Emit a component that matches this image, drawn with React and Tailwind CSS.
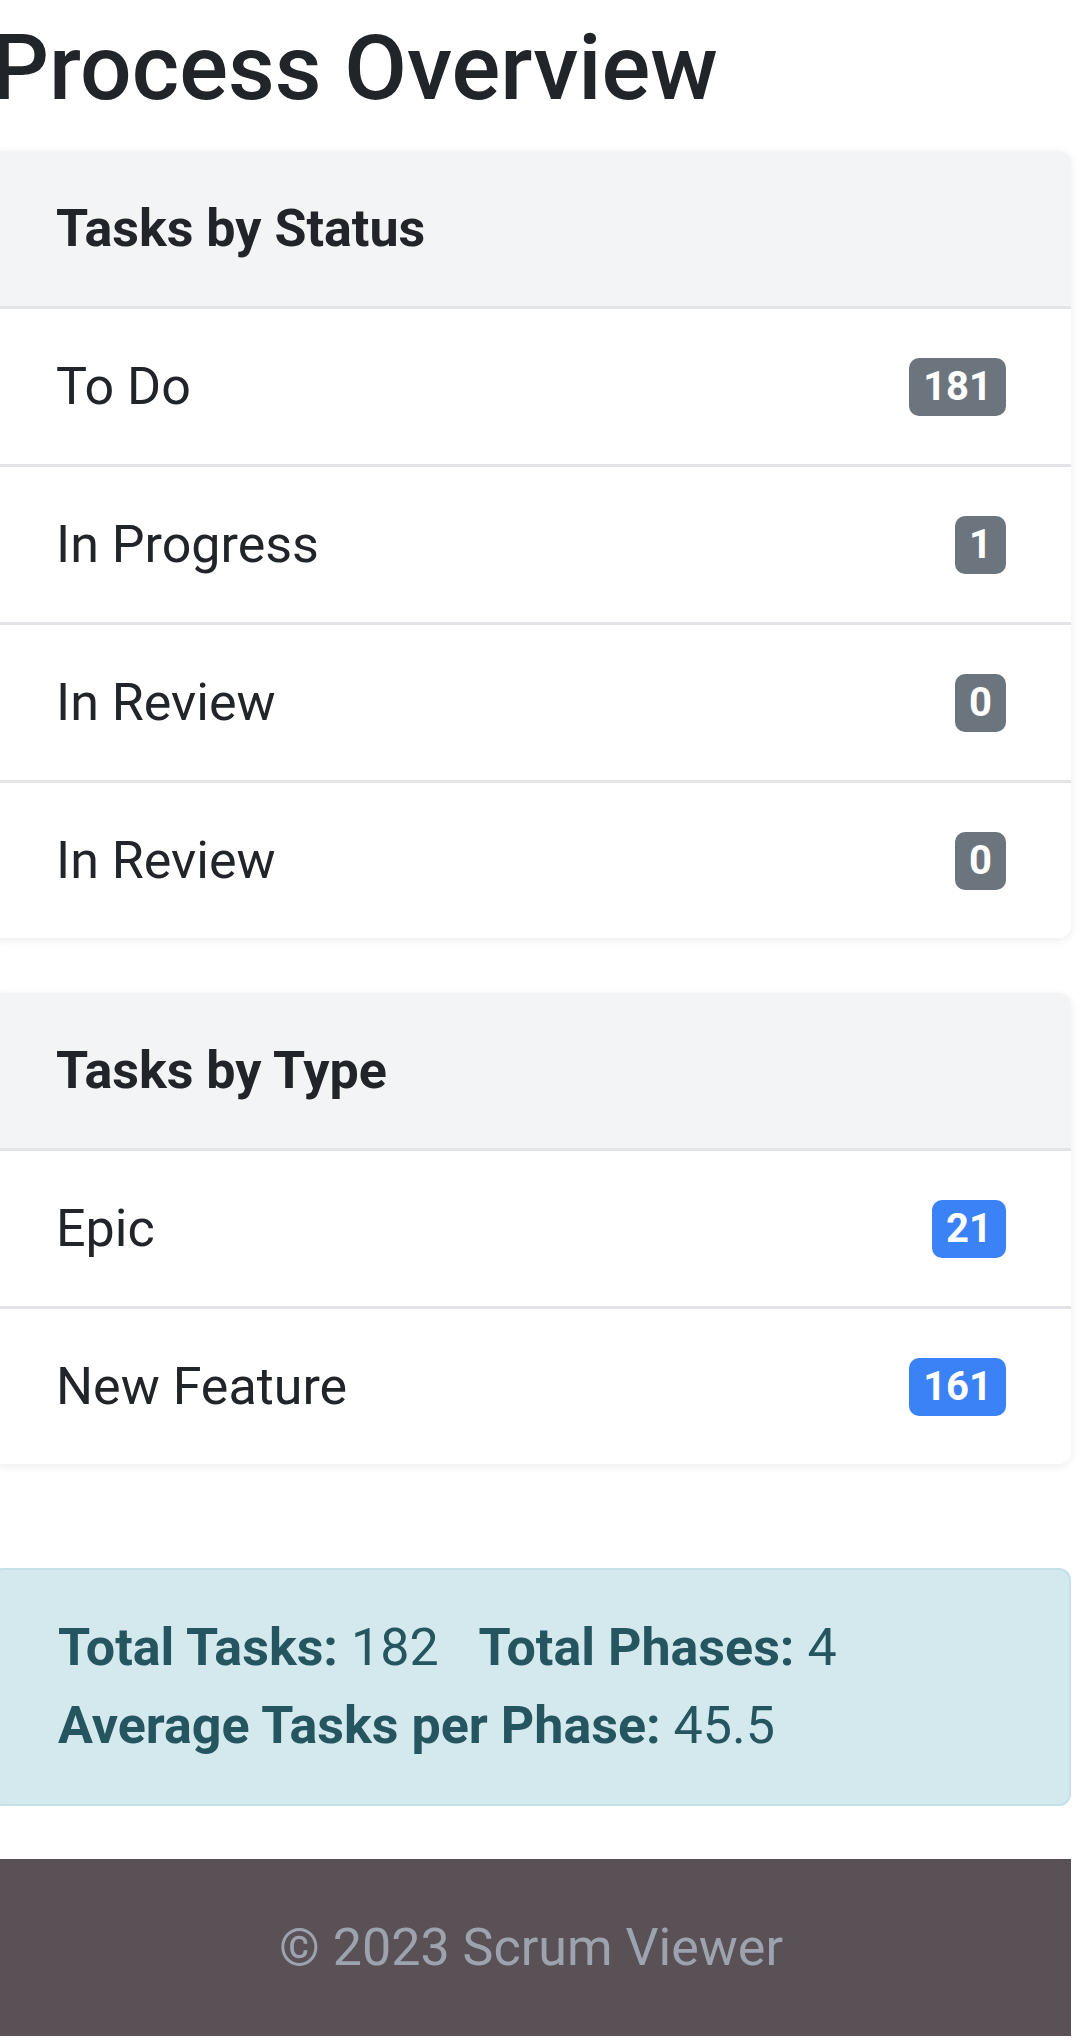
import React from 'react'

const statusRows = [
  { label: 'To Do', count: 181 },
  { label: 'In Progress', count: 1 },
  { label: 'In Review', count: 0 },
  { label: 'In Review', count: 0 },
]

const typeRows = [
  { label: 'Epic', count: 21 },
  { label: 'New Feature', count: 161 },
]

const Badge = ({ value, tone }) => (
  <span
    className={
      tone === 'blue'
        ? 'inline-block rounded-[10px] bg-[#3b82f6] px-[14px] py-[9px] text-[40px] font-bold leading-none text-white'
        : 'inline-block rounded-[10px] bg-[#6c757d] px-[14px] py-[9px] text-[40px] font-bold leading-none text-white'
    }
  >
    {value}
  </span>
)

const ListCard = ({ title, rows, tone }) => (
  <div className="overflow-hidden rounded-[12px] bg-white shadow-[0_2px_10px_rgba(0,0,0,0.08)]">
    <div className="flex h-[158px] items-center border-b-[3px] border-[#e2e4e7] bg-[#f3f4f6] px-[65px]">
      <h5 className="text-[52px] font-bold leading-[1.5]">{title}</h5>
    </div>
    <ul>
      {rows.map((row, i) => (
        <li
          key={i}
          className="flex h-[158px] items-center justify-between border-b-[3px] border-[#e2e4e7] px-[65px] last:h-[155px] last:border-b-0"
        >
          <span className="text-[52px] leading-[1.5]">{row.label}</span>
          <Badge value={row.count} tone={tone} />
        </li>
      ))}
    </ul>
  </div>
)

export default function App() {
  return (
    <div className="-ml-[9px] w-[1080px] bg-white font-['Roboto','Liberation_Sans',sans-serif] text-[#212529]">
      <main className="pt-[14px] pb-[53px]">
        <h1 className="mb-[28px] text-[91px] font-medium leading-[1.2]">Process Overview</h1>

        <div className="flex flex-col gap-[55px]">
          <ListCard title="Tasks by Status" rows={statusRows} tone="gray" />
          <ListCard title="Tasks by Type" rows={typeRows} tone="blue" />
        </div>

        <div className="mt-[104px] rounded-[12px] border-2 border-[#c3e1e8] bg-[#d4e9ee] px-[65px] py-[39px] text-[52px] leading-[1.5] text-[#255660]">
          <p>
            <span className="mr-[40px]">
              <strong className="font-bold">Total Tasks:</strong> 182
            </span>
            <span>
              <strong className="font-bold">Total Phases:</strong> 4
            </span>
          </p>
          <p>
            <strong className="font-bold">Average Tasks per Phase:</strong> 45.5
          </p>
        </div>
      </main>

      <footer className="flex h-[177px] items-center justify-center bg-[#5a5156] text-[52px] text-[#9ca3af]">
        © 2023 Scrum Viewer
      </footer>
    </div>
  )
}
